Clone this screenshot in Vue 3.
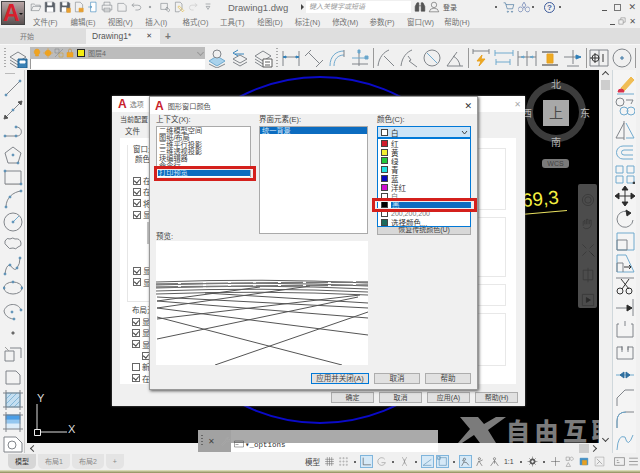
<template>
  <div class="app">
    <header class="head">
      <div class="logo">A<i class="logo-arrow"></i></div>
      <div class="head-right">
        <div class="title-row">
          <div class="qa">
            <Ico v-for="n in quick" :key="n" :n="n" :s="12" />
          </div>
          <span class="doc-title">Drawing1.dwg</span>
          <i class="tri-right"></i>
          <span class="search">键入关键字或短语</span>
          <Ico n="binoc" :s="12" class="binoc" />
          <Ico n="user" :s="12" class="user" />
          <span class="login">登录</span>
          <i class="dot dot-a"></i>
          <Ico n="cart" :s="12" class="cart" />
          <Ico n="a360" :s="12" class="a360" />
          <i class="dot dot-b"></i>
          <span class="help">?</span>
          <i class="dot dot-c"></i>
          <div class="win-ctl">
            <i class="ctl-min"></i>
            <i class="ctl-max"></i>
            <span class="ctl-x">✕</span>
          </div>
        </div>
        <div class="menu-row">
          <span v-for="m in menus" :key="m" class="menu-item">{{ m }}</span>
          <div class="doc-ctl">
            <i class="ctl-min small"></i>
            <Ico n="restore" :s="8" />
            <span class="ctl-x small">✕</span>
          </div>
        </div>
      </div>
    </header>

    <div class="tabs">
      <span class="tab-start">开始</span>
      <div class="tab-active">
        <span>Drawing1*</span>
        <span class="tab-x">✕</span>
      </div>
      <span class="tab-plus">+</span>
    </div>

    <div class="toolbar">
      <i class="grip"></i>
      <Ico n="layerProp" :s="20" class="layer-prop" />
      <div class="layer-combo">
        <div class="layer-top">
          <Ico n="bulb" :s="10" />
          <Ico n="sun" :s="10" />
          <Ico n="freeze" :s="10" />
          <Ico n="lock" :s="10" />
          <i class="yellow"></i>
          <span>图层4</span>
          <i class="chev"></i>
        </div>
        <div class="layer-bottom"></div>
      </div>
      <div class="tool-group layer-tools">
        <Ico n="layerMatch" :s="20" />
        <Ico n="layerPrev" :s="20" />
        <Ico n="layerState" :s="20" />
      </div>
      <i class="grip grip-2"></i>
      <div class="tool-group dim-tools">
        <template v-for="(n, i) in dims" :key="i">
          <i v-if="n === '|'" class="sep"></i>
          <Ico v-else :n="n" :s="20" />
        </template>
      </div>
    </div>

    <div class="main">
      <aside class="left-bar">
        <Ico v-for="n in leftTools" :key="n" :n="n" :s="20" />
      </aside>

      <div class="center">
        <div class="canvas">
          <svg class="blue-circle" width="572" height="373" viewBox="0 0 572 373">
            <circle cx="293" cy="180" r="173" fill="none" stroke="#0a0ac8" stroke-width="2" />
          </svg>

          <div class="yellow-num">69,3<i></i></div>

          <div class="cube">
            <div class="ring"></div>
            <div class="face">上</div>
            <span class="dir n">北</span>
            <span class="dir s">南</span>
            <span class="dir e">东</span>
            <span class="dir w">西</span>
          </div>
          <div class="wcs">WCS</div>

          <div class="navbar">
            <Ico v-for="n in navTools" :key="n" :n="n" :s="16" />
          </div>

          <svg class="ucs" width="60" height="56" viewBox="0 0 60 56">
            <path d="M10 18V43M13 46H40" stroke="#ddd" fill="none" />
            <path d="M7.500 43.500h6v6h-6z" stroke="#eee" fill="none" />
          </svg>
          <span class="ucs-y">Y</span>
          <span class="ucs-x">X</span>

          <div class="mark">
            <svg width="48" height="26" viewBox="0 0 48 26">
              <path d="M2 0H20L26 7L38 0H48L30 13L38 26H22L16 18L4 26H0L12 12Z" fill="#7b7b7b" />
            </svg>
            <span>自由互联</span>
          </div>
        </div>
        <div class="hscroll">
          <i class="arrow-left"></i>
          <i class="h-thumb"></i>
          <i class="arrow-right"></i>
        </div>

        <div class="cmd">
          <div class="cmd-grip">
            <i class="grip dark"></i>
            <span>✕</span>
            <Ico n="wrench" :s="10" />
          </div>
          <div class="cmd-body">
            <div class="cmd-hist"></div>
            <div class="cmd-line">
              <Ico n="prompt" :s="10" />
              <span>▾_options</span>
            </div>
          </div>
        </div>
      </div>

      <div class="vscroll">
        <i class="arrow-up"></i>
        <i class="v-thumb"></i>
        <i class="arrow-down"></i>
      </div>
      <aside class="right-bar">
        <Ico v-for="n in rightTools" :key="n" :n="n" :s="20" />
      </aside>
      <div class="far-right"></div>
    </div>

    <footer class="foot">
      <div class="foot-tabs">
        <span class="ft active">模型</span>
        <span class="ft">布局1</span>
        <span class="ft">布局2</span>
        <span class="ft">+</span>
      </div>
      <div class="status">
        <span class="st-model">模型</span>
        <template v-for="(s, i) in statusItems" :key="i">
          <i v-if="s === '.'" class="st-dot"></i>
          <span v-else-if="s === '1:1'" class="st-scale">1:1</span>
          <span v-else :class="['st-ico', { on: s.endsWith('!'), last: s.startsWith('>') }]">
            <Ico :n="s.replace('!', '').replace('>', '')" :s="11" />
          </span>
        </template>
      </div>
    </footer>
    <div class="sliver"></div>

    <!-- options dialog behind -->
    <section class="options">
      <div class="opt-title">
        <b class="a-logo">A</b>
        <span>选项</span>
        <span class="opt-x">✕</span>
      </div>
      <div class="opt-profile">当前配置</div>
      <div class="opt-tab">文件</div>
      <div class="opt-panel">
        <div class="opt-left">
          <div class="opt-frame">
            <div class="opt-head">窗口元</div>
            <div class="opt-sub">颜色主</div>
            <div class="checks first">
              <label v-for="(c, i) in checksA" :key="i"><i class="chk on"></i>{{ c }}</label>
            </div>
            <div class="opt-gray"></div>
            <div class="checks second">
              <label v-for="(c, i) in checksB" :key="i"><i class="chk on"></i>{{ c }}</label>
            </div>
          </div>
          <div class="opt-head layout">布局元</div>
          <div class="checks third">
            <label><i class="chk on"></i>显</label>
            <label><i class="chk on"></i>显</label>
            <label><i class="chk on"></i>显</label>
            <label class="indent"><i class="chk on"></i></label>
            <label><i class="chk"></i>新</label>
            <label><i class="chk on"></i>在</label>
          </div>
        </div>
        <div class="opt-right">
          <div class="gbox h60"></div>
          <div class="gbox h58"></div>
          <div class="gbox h20"></div>
          <div class="gbox h51"></div>
        </div>
      </div>
      <div class="opt-btns">
        <button>确定</button>
        <button>取消</button>
        <button>应用(A)</button>
        <button>帮助(H)</button>
      </div>
    </section>

    <!-- drawing window colors dialog -->
    <section class="colors">
      <div class="col-title">
        <b class="a-logo">A</b>
        <span>图形窗口颜色</span>
        <span class="col-x">✕</span>
      </div>
      <div class="col-body">
        <div class="col-top">
          <div class="col-ctx">
            <label>上下文(X):</label>
            <ul class="ctx-list">
              <li v-for="c in contexts" :key="c">{{ c }}</li>
              <li class="sel">打印预览</li>
            </ul>
          </div>
          <div class="col-el">
            <label>界面元素(E):</label>
            <ul class="el-list">
              <li class="sel">统一背景</li>
            </ul>
          </div>
          <div class="col-color">
            <label>颜色(C):</label>
            <div class="combo">
              <i class="swatch" style="background:#fff"></i>
              <span>白</span>
              <svg class="combo-chev" width="7" height="5" viewBox="0 0 7 5">
                <path d="M1 1L3.500 4L6 1" fill="none" stroke="#444" />
              </svg>
            </div>
            <div class="restore-btn">恢复传统颜色(U)</div>
            <ul class="dropdown">
              <li v-for="c in colorItems" :key="c.name" :class="{ sel: c.sel, clip: c.clip }">
                <i class="swatch" :style="{ background: c.color }"></i>
                <span>{{ c.name }}</span>
              </li>
            </ul>
          </div>
        </div>
        <label class="preview-label">预览:</label>
        <svg class="preview" width="212" height="124" viewBox="156 241 212 124">
          <rect x="156" y="241" width="212" height="124" fill="#fff" />
          <path v-for="y in horizon" :key="y" :d="`M156 ${y}Q262 ${y - 4} 368 ${y + 1}`" fill="none" stroke="#333" stroke-width=".8" />
          <path d="M156 284L368 282M156 287L368 285" stroke="#777" stroke-width="1.500" stroke-dasharray="22 3" />
          <path v-for="(l, i) in gridLines" :key="i" :d="l" stroke="#555" fill="none" />
        </svg>
        <div class="col-btns">
          <button class="primary">应用并关闭(A)</button>
          <button>取消</button>
          <button>帮助</button>
        </div>
      </div>
    </section>

    <!-- red markers -->
    <i class="red-box box-ctx"></i>
    <i class="red-box box-black"></i>
  </div>
</template>

<script setup>
import { h } from 'vue'

const G = '#7b8085'
const B = '#6aa6cc'
const D = '#2b2b2b'
const dot = (x, y, c = '#5a8fb5') => [`M${x - 0.8} ${y - 0.8}h1.6v1.6h-1.6z`, c, c]

const ICONS = {
  open: [['M2 16V5h5l2 2h8v3M2 16l3-7h13l-3 7z', G]],
  save: [['M2 2h14l2 2v14H2z', '#5a6068', '#5a6068'], ['M6 2h7v5H6zM5 11h10v7H5z', '#fff', '#fff']],
  saveas: [['M2 2h14l2 2v14H2z', '#5a6068', '#5a6068'], ['M6 2h7v5H6zM5 11h7v7H5z', '#fff', '#fff'], ['M13 12h6v7h-6z', '#e8a030', '#e8a030']],
  docUser: [['M4 2h8l4 4v12H4z', G], ['M10 12h7v6h-7z', '#e8a030', '#e8a030']],
  phone: [['M6 2h9v16H6z', '#2f7fb8', '#fff'], ['M2 10h6M6 8l2 2l-2 2', '#2f7fb8']],
  print: [['M5 7V2h10v5M2 7h16v8H2zM5 12h10v6H5z', G]],
  doc: [['M3 4h10l4 4v9H3z', G]],
  undo: [['M4 7h9q5 0 5 4t-5 4H9M7 4L3 7l4 3', G]],
  tdot: [['M9 9h2v2H9z', G, G]],
  cube2: [['M3 4h11v10H3zM13 10l5 5l-2 3l-5-4z', G]],
  mark2: [['M4 2h8l3 3v8l-5 5H4z', G], ['M10 8l8 8l-2 2l-8-8z', '#e0b020']],
  redo: [['M16 7H8q-4 0-4 4t4 4h3M13 4l4 3l-4 3', '#c4c4c4']],
  chevq: [['M6 5h8M7 9h6l-3 5z', G]],
  binoc: [['M2 17V9l3-6h3v14zM18 17V9l-3-6h-3v14zM8 8h4', '#444', '#555']],
  user: [['M10 2a4 4 0 1 1 0 9a4 4 0 1 1 0-9zM2 18q1-6 8-6t8 6z', '#555']],
  cart: [['M1 3h3l3 10h9l2-7H5M8 17a1 1 0 1 0 .1 0M15 17a1 1 0 1 0 .1 0', '#28608f']],
  a360: [['M10 2l3 5l-3 5l-3-5zM4 10a4 4 0 1 0 .1 0M16 10a4 4 0 1 0 .1 0', '#3d5b9b']],
  restore: [['M2 7h11v11H2zM7 7V2h11v11h-5', '#555']],
  layerProp: [['M2 9l8-5l8 5l-8 5zM2 12l8 5l8-5M2 15l8 5', G], ['M10 11h9v9h-9z', '#1d5f8f', '#3b82b6'], ['M12 13h5v2h-5z', '#fff', '#fff']],
  bulb: [['M10 2a6 6 0 0 1 3 11v3H7v-3a6 6 0 0 1 3-11z', '#e89a20', '#f0a420']],
  sun: [['M10 4a6 6 0 1 0 .1 0z', '#e89a20', '#f0a420'], ['M10 0v20M0 10h20', '#f0a420']],
  freeze: [['M2 2h8v8H2z', G], ['M10 10h8v8h-8z', '#d7a020'], ['M2 18L18 2', G]],
  lock: [['M4 9h12v9H4z', '#e89a20', '#f0a420'], ['M7 9V5a3 3 0 0 1 6 0v4', '#c08020']],
  layerMatch: [['M2 13l8-5l8 5l-8 5z', B, '#a9d2ec'], ['M2 16l8 4l8-4', G], ['M10 2a4 4 0 1 1 0 8a4 4 0 1 1 0-8z', G, '#f0f0f0']],
  layerPrev: [['M3 11l7-4l7 4l-7 4zM3 14l7 4l7-4', G], ['M14 6H5M8 2L3 5l5 3', '#2f7fb8']],
  layerState: [['M2 8l8-5l8 5l-8 5zM2 11l8 5M2 14l8 5', G], ['M10 11h9v8h-9zM12 14h5M12 17h5', '#555', '#fff']],
  dimLin: [['M2 3v15M18 3v15M2 9h16', G], ['M2 9l3-1v2zM18 9l-3-1v2z', '#2f7fb8', '#2f7fb8']],
  dimAli: [['M1 8L7 2M12 19L19 12M5 5l10 10', G]],
  dimArc: [['M3 18C3 8 9 3 17 3M7 18C7 11 11 7 17 7', B], ['M17 2v7', G]],
  dimOrd: [['M2 16h16M9 4v14', G], ['M2 10h16', B], ['M8 2h2v3H8zM15 8h3v3h-3z', B, B]],
  dimRad: [['M2 18C3 9 8 4 13 2M8 8l10 10', G]],
  dimJog: [['M2 18C3 9 8 4 13 2M9 8l3 4l-2 1l8 6', G]],
  dimDia: [['M2 10a8 8 0 1 0 16 0a8 8 0 1 0-16 0', G], ['M5 5l10 10', B]],
  dimAng: [['M2 18L12 4M18 18H2M8 8q6 3 7 10', G]],
  dimQuick: [['M2 3h16M2 1v5M18 1v5', G], ['M11 7L6 13h4l-2 5l6-7h-4z', '#e8a020', '#eeaa20']],
  dimBase: [['M1 5h18M2 14h14M1 2v6M19 2v6M2 11v6M16 11v6', B]],
  dimCont: [['M1 9h18M1 3v15M10 3v15M19 3v15', G], ['M4 9l3-1v2zM13 9l3-1v2z', B, B]],
  dimSpace: [['M2 4h16M2 17h16', D], ['M7 6h6v9H7z', '#e8a020', '#eeaa20']],
  dimBreak: [['M1 9h17M10 2v14M4 18h12', G], ['M13 7l5 2l-5 2z', '#2f7fb8', '#2f7fb8']],
  center1: [['M1 2h18v16H1zM10 2v16', G], ['M3 10a3.500 3.500 0 1 0 7 0a3.500 3.500 0 1 0-7 0M1 10h9M6 5v10', D], ['M14 6v8', D]],
  centerO: [['M1 10a9 9 0 1 0 18 0a9 9 0 1 0-18 0', G], ['M8 10h4M10 8v4', '#2f6f9f']],

  line: [['M3 17L17 3', G], dot(3, 17), dot(17, 3)],
  xline: [['M3 17L17 3', G], ['M1 19l1-4l3 3zM19 1l-1 4l-3-3z', '#555', '#555'], dot(10, 10)],
  poly: [['M2 13H14C20 13 20 4 13 4', G], dot(2, 13), dot(13, 13), dot(13, 4)],
  pent: [['M10 2L18 8L15 18H5L2 8Z', G], dot(10, 10), dot(15, 18)],
  rect: [['M2 4H18V17H2Z', G], ['M2 17.500H18', '#aaa'], dot(2, 4), dot(18, 17)],
  arc: [['M3 18C3 9 10 3 18 2', G], dot(3, 18), dot(7, 8), dot(18, 2)],
  circle: [['M1 10a9 9 0 1 0 18 0a9 9 0 1 0-18 0', G], ['M10 10L16 4', B], dot(10, 10)],
  cloud: [['M2 7q2-4 5-2q3-2 5 0q5-1 6 4q1 3-3 4q-2 3-5 1q-4 2-6-2q-3-2-2-5z', G]],
  spline: [['M2 18Q3 9 7 9Q12 16 14 12Q17 8 17 2', G], dot(2, 18), dot(7, 9), dot(14, 12), dot(17, 2)],
  ellipse: [['M1 10a9 6 0 1 0 18 0a9 6 0 1 0-18 0', G], dot(1, 10), dot(19, 10), dot(10, 4)],
  ellarc: [['M18 9C15 1 3 2 1 10C2 16 8 18 11 18', G], dot(9, 11), dot(18, 9), dot(11, 18)],
  block: [['M2 6h9v10H2zM7 3h11v10', G], ['M2 2l4 4', '#999']],
  points: [['M9 9h2v2H9z', '#6a6a6a', '#6a6a6a']],
  hatch: [['M3 3h14v14H3z', '#7eb5d8', '#c4def0'], ['M3 9L9 3M3 14L14 3M6 17L17 6M11 17L17 11', '#7fb5d8'], ['M0 3h20M0 17h20M3 0v20M17 0v20', G]],
  grad: [['M3 3h14v5H3z', '#3c90dc', '#4c9ee6'], ['M3 8h14v4H3z', '#93c6ef', '#93c6ef'], ['M3 12h14v5H3z', '#dcedfa', '#dcedfa'], ['M0 3h20M0 17h20M3 0v20M17 0v20', G]],
  region: [['M1 3H13L19 9V18H1Z', G, '#fff'], ['M5 11a4 4 0 1 0 8 0a4 4 0 1 0-8 0', G]],

  eraser: [['M6 13L16 2l3 3L9 16z', '#eeb84a', '#f0bd55'], ['M3 17a3 3 0 1 1 6 0z', '#d8304a', '#d8304a'], ['M2 19h17', B]],
  copy: [['M1 5a4 4 0 1 0 8 0a4 4 0 1 0-8 0M11 3h7l-2 4', G], ['M5 14a4 4 0 1 0 8 0a4 4 0 1 0-8 0M12 14a4 4 0 1 0 8 0a4 4 0 1 0-8 0', B]],
  mirror: [['M9 1v19M9 3L1 18h8', G], ['M11 3L19 18h-8', B]],
  offset: [['M18 4H8a6 6 0 0 0 0 13h10M18 8H9a2.500 2.500 0 0 0 0 5h9', B]],
  array: [['M1 2h7v7H1zM12 2h7v7h-7zM1 12h7v7H1zM12 12h7v7h-7z', B], dot(19, 19, '#333')],
  move: [['M10 1v18M1 10h18', D], ['M10 0l3 4H7zM10 20l3-4H7zM0 10l4-3v6zM20 10l-4-3v6z', D, D]],
  rotate: [['M15 4A8 8 0 1 0 18 11', G], ['M11 1l5 3l-4 3z', D, D]],
  scale: [['M2 2h17v17H2z', B], ['M2 9h10v10H2z', G]],
  stretch: [['M2 2h9l8 17H2z', B], ['M2 10v9M2 10h6v9', G], ['M9 14h7l-2-2M16 14l-2 2', D]],
  scissors: [['M1 2h18', G], ['M6 3l8 10M14 3L7 13', D], ['M2 15a3 3 0 1 0 6 0a3 3 0 1 0-6 0M11 15a3 3 0 1 0 6 0a3 3 0 1 0-6 0', D]],
  extend: [['M18 1v17M1 10h16', G], ['M12 7l5 3l-5 3z', D, D]],
  breakP: [['M2 4h2M16 4h2M10 1v5M2 4v13h16V4', G]],
  breakL: [['M2 4h5v3M18 4h-5v3M7 3v6M13 3v6M2 4v12h16V4', G]],
  join: [['M1 10h18', B], ['M5 10l4-3v6zM15 10l-4-3v6z', '#2f6f9f', '#2f6f9f']],
  chamfer: [['M2 19V11L10 3H19', G]],
  fillet: [['M2 19V12Q2 3 11 3H19', G], ['M2 19V12Q2 3 11 3', B]],
  wave: [['M2 18Q3 2 10 5Q13 17 18 3', B]],

  wrench: [['M3 17L12 8a4 4 0 0 1 5-5l-3 3l1 2l2 0l2-2a4 4 0 0 1-6 5l-8 8z', '#aaa']],
  prompt: [['M1 4h18v12H1zM1 7h18M3 11h6', '#444']],
  nav1: [['M3 10a7 7 0 1 0 14 0a7 7 0 1 0-14 0M6 10a4 4 0 1 0 8 0a4 4 0 1 0-8 0', '#383838']],
  nav2: [['M4 11V6l2-2v5M8 9V3h2v6M12 9V4h2v6a6 6 0 0 1-10 3', '#383838']],
  nav3: [['M3 3l5 5M17 3l-5 5M3 17l5-5M11 11l5 5', '#383838'], ['M14 14l4 4', '#2a2a2a']],
  nav4: [['M10 1v18M4 4h12v12H4z', '#383838']],
  nav5: [['M3 3h14v14H3z', '#383838'], ['M8 7l5 3l-5 3z', '#2a2a2a', '#2a2a2a']],
  grid: [['M2 6h16M2 10h16M2 14h16M6 2v16M10 2v16M14 2v16', '#666']],
  snap: [['M3 3h2v2H3zM9 3h2v2H9zM15 3h2v2h-2zM3 9h2v2H3zM9 9h2v2H9zM15 9h2v2h-2zM3 15h2v2H3zM9 15h2v2H9zM15 15h2v2h-2z', '#999']],
  ortho: [['M4 3V16H18', '#333']],
  polar: [['M16 6A7 7 0 1 0 17 12H10', '#888']],
  iso: [['M6 2L14 18M14 2L6 18M10 6v8', '#888']],
  osnap: [['M2 17L17 6M2 17H17', '#4680a8']],
  otrack: [['M4 3h13v14H4z', '#4680a8'], ['M1 1h5v5H1z', '#4680a8']],
  person: [['M8 4a2 2 0 1 1 0 4a2 2 0 1 1 0-4zM3 18l4-7l5 1l4 5M8 10L4 8', '#333']],
  person2: [['M8 3a2 2 0 1 1 0 4a2 2 0 1 1 0-4zM3 18l4-9l6 9M8 10l6-3', '#444']],
  person3: [['M10 3a2 2 0 1 1 0 4a2 2 0 1 1 0-4zM3 18l7-10l7 10M10 9v5', '#444']],
  gear: [['M10 5a5 5 0 1 0 .1 0z', '#555', '#555'], ['M10 1v18M1 10h18M4 4l12 12M16 4L4 16', '#555'], ['M10 8a2 2 0 1 0 .1 0z', '#f0f0f0', '#f0f0f0']],
  plus: [['M10 2v16M2 10h16', '#555']],
  shapes: [['M2 2h6v6H2zM12 2a3 3 0 1 0 .1 0M6 12l4 7H2z', '#888']],
  info: [['M2 4h14v12H2z', '#2f7fb8', '#3f8fc8'], ['M6 8h8v8H6z', '#e8a020', '#e8a020']],
  isolate: [['M2 2h16v16H2z', '#999'], ['M5 5l10 10M5 15l5-5', '#777']],
  maxi: [['M1 3h18v14H1z', '#555'], ['M5 12h5M5 8h3', '#555']],
  burger: [['M2 4h16M2 10h16M2 16h16', '#555']]
}

// small svg helper so the long icon lists stay readable
const Ico = (props) =>
  h(
    'svg',
    { width: props.s, height: props.s, viewBox: '0 0 20 20', style: 'display:block;flex:none;overflow:hidden' },
    (ICONS[props.n] || []).map((p) =>
      h('path', { d: p[0], stroke: p[1], fill: p[2] || 'none', 'stroke-width': 0.95 })
    )
  )
Ico.props = ['n', 's']

const quick = ['open', 'save', 'saveas', 'docUser', 'phone', 'print', 'doc', 'undo', 'tdot', 'cube2', 'mark2', 'redo', 'chevq']
const menus = ['文件(F)', '编辑(E)', '视图(V)', '插入(I)', '格式(O)', '工具(T)', '绘图(D)', '标注(N)', '修改(M)', '参数(P)', '窗口(W)', '帮助(H)']
const dims = ['dimLin', 'dimAli', 'dimArc', 'dimOrd', '|', 'dimRad', 'dimJog', 'dimDia', 'dimAng', '|', 'dimQuick', 'dimBase', 'dimCont', 'dimSpace', 'dimBreak', '|', 'center1', 'centerO', '|']
const leftTools = ['line', 'xline', 'poly', 'pent', 'rect', 'arc', 'circle', 'cloud', 'spline', 'ellipse', 'ellarc', 'points', 'block', 'doc', 'hatch', 'grad', 'region']
const rightTools = ['eraser', 'copy', 'mirror', 'offset', 'array', 'move', 'rotate', 'scale', 'stretch', 'scissors', 'extend', 'breakP', 'breakL', 'join', 'chamfer', 'fillet', 'wave']
const navTools = ['nav1', 'nav2', 'nav3', 'nav4', 'nav5']
const statusItems = ['grid', 'snap', '.', 'ortho!', 'polar', '.', 'iso', '.', 'osnap!', 'otrack!', '.', 'person!', 'person2', 'person3', '1:1', '.', 'gear', '.', 'plus', 'shapes', 'info', 'isolate', '>maxi', 'burger']

const checksA = ['在', '在', '将', '显']
const checksB = ['显', '显']
const contexts = ['二维模型空间', '图纸/布局', '三维平行投影', '三维透视投影', '块编辑器', '命令行']
const colorItems = [
  { name: '红', color: '#d01c2c' },
  { name: '黄', color: '#f2ee30' },
  { name: '绿', color: '#22c83c' },
  { name: '青', color: '#20e0e0' },
  { name: '蓝', color: '#0808c0' },
  { name: '洋红', color: '#d010d0' },
  { name: '白', color: '#fff', clip: true },
  { name: '黑', color: '#000', sel: true },
  { name: '200,200,200', color: '#fff', clip: true },
  { name: '选择颜色...', color: '#1c6a5c' }
]
const horizon = [282, 285, 288, 291, 294]
const gridLines = [
  'M215 365L368 312',
  'M157 317L342 365',
  'M157 308L368 335',
  'M157 319L360 295',
  'M157 339L358 297',
  'M157 301L368 318',
  'M157 297L368 308',
  'M157 308L310 286',
  'M157 301L260 287',
  'M205 293L368 303'
]
</script>

<style>
html,
body {
  margin: 0;
  background: #f0f0f0;
}
</style>

<style scoped>
.app {
  position: relative;
  width: 640px;
  height: 473px;
  overflow: hidden;
  display: flex;
  flex-direction: column;
  background: #f0f0f0;
  color: #555;
  font: 8px "Liberation Sans", "Noto Sans CJK SC", sans-serif;
}
ul {
  margin: 0;
  padding: 0;
  list-style: none;
}
i {
  display: block;
  flex: none;
}
button {
  font: inherit;
  color: #444;
  background: #e1e1e1;
  border: 1px solid #adadad;
  padding: 0;
}

/* head */
.head {
  display: flex;
  height: 28px;
  flex: none;
}
.logo {
  position: relative;
  width: 24px;
  height: 24px;
  margin: 1px 2px 3px 1px;
  background: linear-gradient(#b9a6a6, #5b5252);
  border: 1px solid #444;
  box-sizing: border-box;
  color: #d8202c;
  font: bold 23px/22px "Liberation Sans", sans-serif;
  padding-left: 1px;
}
.logo-arrow {
  position: absolute;
  right: 1px;
  bottom: 7px;
  border: 2px solid transparent;
  border-top-color: #111;
}
.head-right {
  flex: 1;
  min-width: 0;
}
.title-row {
  display: flex;
  align-items: center;
  height: 14px;
  padding-left: 3px;
}
.qa {
  display: flex;
  gap: 2.300px;
  width: 182px;
  flex: none;
}
.doc-title {
  margin-left: 16px;
  width: 50px;
  color: #666;
  font-size: 9.500px;
  white-space: nowrap;
}
.tri-right {
  margin-left: 23px;
  border: 3px solid transparent;
  border-left: 3px solid #444;
  border-right: 0;
}
.search {
  margin-left: 2px;
  width: 105px;
  height: 12px;
  box-sizing: border-box;
  padding-left: 3px;
  background: #fff;
  font: italic 7px/12px "Liberation Sans", "Noto Sans CJK SC", sans-serif;
  color: #999;
}
.binoc {
  margin-left: 3px;
}
.user {
  margin-left: 2px;
}
.login {
  margin-left: 3px;
  font-size: 7px;
  width: 16px;
}
.dot {
  width: 2px;
  height: 2px;
  background: #666;
}
.dot-a {
  margin-left: 36px;
}
.cart {
  margin-left: 6px;
}
.a360 {
  margin-left: 3px;
}
.dot-b {
  margin-left: 2px;
}
.help {
  margin-left: 10px;
  width: 11px;
  height: 11px;
  box-sizing: border-box;
  border: 1px solid #3d5b9b;
  border-radius: 50%;
  color: #3d5b9b;
  font: bold 8px/9px "Liberation Sans", sans-serif;
  text-align: center;
}
.dot-c {
  margin-left: 4px;
}
.win-ctl {
  margin-left: auto;
  padding-right: 4px;
  display: flex;
  align-items: center;
  gap: 7px;
  color: #555;
}
.ctl-min {
  width: 5px;
  height: 1px;
  background: #555;
  margin-top: 6px;
}
.ctl-max {
  width: 7px;
  height: 7px;
  border: 1px solid #777;
  box-sizing: border-box;
}
.ctl-x {
  font: 9px/9px "DejaVu Sans", sans-serif;
}
.menu-row {
  display: flex;
  align-items: center;
  height: 14px;
  padding-left: 6px;
}
.menu-item {
  width: 37.400px;
  flex: none;
  white-space: nowrap;
  color: #707070;
  font-size: 7.500px;
}
.doc-ctl {
  margin-left: auto;
  padding-right: 4px;
  display: flex;
  align-items: center;
  gap: 3px;
}
.small {
  font-size: 8px;
}

/* file tabs */
.tabs {
  display: flex;
  align-items: center;
  flex: none;
  height: 16px;
  background: #dedede;
}
.tab-start {
  margin-left: 20px;
  width: 66px;
  color: #777;
  font-size: 7px;
}
.tab-active {
  display: flex;
  align-items: center;
  justify-content: space-between;
  width: 74px;
  height: 15px;
  box-sizing: border-box;
  padding: 0 8px 0 6px;
  background: #f2f2f2;
  font-size: 8.500px;
  color: #555;
}
.tab-x {
  font: 7px "DejaVu Sans", sans-serif;
  color: #444;
}
.tab-plus {
  margin-left: 5px;
  font: bold 10px "Liberation Sans", sans-serif;
  color: #777;
}

/* toolbar */
.toolbar {
  display: flex;
  align-items: center;
  flex: none;
  height: 26px;
  padding-left: 4px;
  background: #f0f0f0;
  border-top: 1px solid #f8f8f8;
  box-sizing: border-box;
}
.grip {
  width: 2px;
  height: 20px;
  background: repeating-linear-gradient(#aaa 0 1px, transparent 1px 3px);
}
.grip.dark {
  background: repeating-linear-gradient(#666 0 1px, transparent 1px 3px);
}
.layer-prop {
  margin-left: 2px;
}
.layer-combo {
  margin-left: 2px;
  width: 175px;
  flex: none;
}
.layer-top {
  display: flex;
  align-items: center;
  gap: 1px;
  height: 12px;
  padding-left: 2px;
  background: #bcbcbc;
  color: #666;
  font-size: 7px;
}
.yellow {
  width: 8px;
  height: 8px;
  background: #f4ec10;
  border: 1px solid #222;
  box-sizing: border-box;
  margin-right: 2px;
  margin-left: 1px;
}
.chev {
  margin-left: auto;
  margin-right: 2px;
  width: 4px;
  height: 4px;
  border-right: 1px solid #999;
  border-bottom: 1px solid #999;
  transform: rotate(45deg);
}
.layer-bottom {
  height: 10px;
  background: #fff;
  border-left: 1px solid #999;
}
.tool-group {
  display: flex;
  gap: 3px;
  align-items: center;
}
.layer-tools {
  margin-left: 2px;
}
.grip-2 {
  margin-left: 3px;
}
.dim-tools {
  margin-left: 3px;
}
.sep {
  width: 1px;
  height: 20px;
  background: #999;
  margin-right: -1px;
}

/* main area */
.main {
  flex: 1;
  min-height: 0;
  display: flex;
}
.left-bar {
  width: 25px;
  margin-right: 2px;
  flex: none;
  box-sizing: border-box;
  padding: 8px 0 0 3px;
  display: flex;
  flex-direction: column;
  gap: 2.250px;
  background: linear-gradient(#bbb, #bbb) 5px 3px / 10px 1px no-repeat, #f2f2f2;
  border-right: 1px solid #c9c9c9;
}
.center {
  position: relative;
  width: 572px;
  flex: none;
  display: flex;
  flex-direction: column;
}
.canvas {
  position: relative;
  flex: 1;
  background: #000;
  overflow: hidden;
}
.hscroll {
  flex: none;
  height: 10px;
  display: flex;
  align-items: center;
  background: #f0f0f0;
  padding: 0 3px 0 4px;
}
.arrow-left,
.arrow-right {
  width: 4px;
  height: 4px;
  border-left: 1px solid #444;
  border-bottom: 1px solid #444;
  transform: rotate(45deg);
}
.arrow-right {
  transform: rotate(225deg);
  margin-left: 2px;
}
.h-thumb {
  margin-left: auto;
  width: 10px;
  height: 9px;
  background: #cdcdcd;
}
.vscroll {
  width: 13px;
  flex: none;
  display: flex;
  flex-direction: column;
  align-items: center;
  padding-top: 2px;
  box-sizing: border-box;
  background: #f0f0f0;
}
.arrow-up,
.arrow-down {
  width: 4px;
  height: 4px;
  border-left: 1px solid #444;
  border-top: 1px solid #444;
  transform: rotate(45deg);
}
.arrow-down {
  transform: rotate(225deg);
  margin-top: auto;
  margin-bottom: 12px;
}
.v-thumb {
  margin-top: 3px;
  width: 9px;
  height: 10px;
  background: #cdcdcd;
}
.right-bar {
  width: 24px;
  flex: none;
  box-sizing: border-box;
  padding: 5px 0 0 2px;
  display: flex;
  flex-direction: column;
  gap: 2.300px;
  background: #f4f4f4;
  border-left: 1px solid #d0d8dc;
  overflow: hidden;
}
.far-right {
  flex: 1;
}

/* things on the drawing */
.blue-circle {
  position: absolute;
  left: 0;
  top: 0;
}
.yellow-num {
  position: absolute;
  left: 495px;
  top: 118px;
  color: #f4f040;
  font-size: 19px;
  line-height: 21px;
  transform: rotate(-5deg);
}
.yellow-num i {
  width: 46px;
  height: 1px;
  background: #e8e060;
  margin: 3px 0 0 -2px;
}
.cube {
  position: absolute;
  left: 492px;
  top: 9px;
  width: 76px;
  height: 70px;
}
.ring {
  position: absolute;
  left: 7px;
  top: 3px;
  width: 60px;
  height: 60px;
  box-sizing: border-box;
  border: 7px solid #3c3c3c;
  border-radius: 50%;
}
.face {
  position: absolute;
  left: 24px;
  top: 21px;
  width: 26px;
  height: 26px;
  background: #a8a8a8;
  color: #4a4a4a;
  font-size: 14px;
  line-height: 26px;
  text-align: center;
}
.dir {
  position: absolute;
  color: #b8b8b8;
  font-size: 10px;
  line-height: 12px;
}
.n {
  left: 32px;
  top: 0;
}
.s {
  left: 32px;
  top: 58px;
}
.e {
  left: 61px;
  top: 29px;
}
.w {
  left: 3px;
  top: 29px;
}
.wcs {
  position: absolute;
  left: 515px;
  top: 89px;
  width: 27px;
  height: 9px;
  border-radius: 3px;
  background: #7a7a7a;
  color: #444;
  font-size: 7px;
  line-height: 9px;
  text-align: center;
}
.navbar {
  position: absolute;
  left: 551px;
  top: 114px;
  width: 19px;
  height: 124px;
  box-sizing: border-box;
  padding: 8px 0 0 2px;
  display: flex;
  flex-direction: column;
  gap: 9px;
  border-radius: 2px;
  background: #4c4c4c;
}
.ucs {
  position: absolute;
  left: 0;
  top: 316px;
}
.ucs-y,
.ucs-x {
  position: absolute;
  color: #ddd;
  font-size: 11px;
  line-height: 11px;
}
.ucs-y {
  left: 10px;
  top: 323px;
}
.ucs-x {
  left: 41px;
  top: 354px;
}
.mark {
  position: absolute;
  left: 431px;
  top: 347px;
  display: flex;
  align-items: flex-start;
  color: #7b7b7b;
  font: 900 24px/26px "Noto Sans CJK SC", sans-serif;
  letter-spacing: 4.500px;
  white-space: nowrap;
}
.cmd {
  position: absolute;
  left: 171px;
  top: 360px;
  width: 240px;
  height: 22px;
  display: flex;
}
.cmd-grip {
  width: 33px;
  display: flex;
  align-items: center;
  gap: 5px;
  padding-left: 3px;
  box-sizing: border-box;
  background: #a2a2a2;
  color: #444;
  font: 8px "DejaVu Sans", sans-serif;
}
.cmd-grip .grip {
  height: 12px;
}
.cmd-body {
  flex: 1;
  min-width: 0;
}
.cmd-hist {
  height: 13px;
  background: #aaa;
}
.cmd-line {
  display: flex;
  align-items: center;
  height: 9px;
  gap: 1px;
  padding-left: 3px;
  background: #fff;
  color: #333;
  font: 7.500px "Liberation Mono", monospace;
}
.cmd-line > * {
  margin-top: -7px;
}

/* bottom */
.foot {
  display: flex;
  align-items: center;
  flex: none;
  height: 17px;
  background: #f0f0f0;
}
.foot-tabs {
  display: flex;
  width: 305px;
  flex: none;
  padding-left: 8px;
  box-sizing: border-box;
  gap: 2px;
  color: #888;
  font-size: 7px;
}
.ft {
  padding: 0 7px;
  line-height: 15px;
  background: #e4e4e4;
  border-radius: 0 0 5px 5px;
}
.ft.active {
  color: #333;
  background: #d6d6d6;
}
.status {
  display: flex;
  align-items: center;
  gap: 3.600px;
  color: #444;
  font-size: 7.500px;
}
.st-model {
  width: 15px;
  flex: none;
  white-space: nowrap;
}
.st-ico {
  width: 11px;
  height: 11px;
  flex: none;
}
.st-ico.on {
  outline: 1px solid #7fb5dc;
  background: #d6e9f7;
}
.st-ico.last {
  margin-left: 5px;
}
.st-dot {
  width: 5px;
  height: 2px;
  background: linear-gradient(90deg, transparent 1px, #666 1px, #666 3px, transparent 3px);
}
.st-scale {
  width: 11px;
  flex: none;
  font-size: 7px;
}
.sliver {
  flex: none;
  height: 3px;
  background: linear-gradient(#e8e8c8, #8b8b58);
}

/* options dialog */
.options {
  position: absolute;
  left: 112px;
  top: 96px;
  width: 413px;
  height: 310px;
  display: flex;
  flex-direction: column;
  background: #f0f0f0;
  color: #444;
  box-shadow: 0 0 2px #666;
}
.opt-title {
  display: flex;
  align-items: center;
  gap: 3px;
  height: 16px;
  flex: none;
  padding-left: 6px;
  background: #fff;
  color: #777;
  font-size: 7px;
}
.a-logo {
  color: #c8202a;
  font: bold 12px/12px "Liberation Sans", sans-serif;
}
.opt-x {
  margin-left: auto;
  margin-right: 4px;
  color: #aaa;
  font: 8px "DejaVu Sans", sans-serif;
}
.opt-profile {
  margin: 2px 0 0 8px;
  line-height: 11px;
  font-size: 7px;
  white-space: nowrap;
}
.opt-tab {
  margin-left: 13px;
  line-height: 12px;
  padding-top: 1px;
  font-size: 7.500px;
  white-space: nowrap;
}
.opt-panel {
  flex: none;
  height: 246px;
  margin: 0 9px 0 8px;
  background: #fff;
  display: flex;
  justify-content: space-between;
  padding: 7px 10px 0 7px;
  box-sizing: border-box;
}
.opt-left {
  width: 60px;
}
.opt-frame {
  height: 157px;
  border-left: 1px solid #e6e6e6;
  border-bottom: 1px solid #e6e6e6;
  padding-left: 5px;
  box-sizing: border-box;
}
.opt-head {
  line-height: 9px;
  font-size: 7.500px;
}
.opt-head.layout {
  margin: 4px 0 0 5px;
}
.opt-sub {
  margin: 1px 0 0 2px;
  line-height: 9px;
  font-size: 7.500px;
}
.checks {
  display: flex;
  flex-direction: column;
}
.checks label {
  display: flex;
  align-items: center;
  gap: 2px;
  height: 11.300px;
  font-size: 8px;
}
.checks .indent {
  padding-left: 10px;
}
.first {
  margin-top: 11px;
}
.second {
  margin-top: 21px;
}
.third {
  margin: 1px 0 0 5px;
}
.chk {
  position: relative;
  width: 8px;
  height: 8px;
  box-sizing: border-box;
  border: 1px solid #666;
  background: #fff;
}
.chk.on::after {
  content: '';
  position: absolute;
  left: 1px;
  top: 0;
  width: 3px;
  height: 4px;
  border-right: 1px solid #444;
  border-bottom: 1px solid #444;
  transform: rotate(40deg);
}
.opt-gray {
  margin: 2px 0 0 14px;
  width: 3px;
  height: 22px;
  background: #c4c4c4;
}
.opt-right {
  width: 28px;
  margin-top: 3px;
  display: flex;
  flex-direction: column;
  gap: 7px;
}
.gbox {
  border: 1px solid #e8e8e8;
  border-left: 0;
}
.h60 {
  height: 60px;
}
.h58 {
  height: 58px;
}
.h20 {
  height: 20px;
}
.h51 {
  height: 51px;
}
.opt-btns {
  margin: 8px 7px 0 auto;
  display: flex;
  gap: 5px;
}
.opt-btns button {
  width: 43px;
  height: 11px;
  font-size: 7px;
  line-height: 9px;
}

/* colors dialog */
.colors {
  position: absolute;
  left: 149px;
  top: 96px;
  width: 329px;
  height: 294px;
  display: flex;
  flex-direction: column;
  background: #f0f0f0;
  box-shadow: 1px 1px 3px #555;
  border: 1px solid #999;
  box-sizing: border-box;
  color: #444;
}
.col-title {
  display: flex;
  align-items: center;
  gap: 4px;
  flex: none;
  height: 17px;
  padding-left: 5px;
  background: #fff;
  font-size: 7.200px;
  color: #555;
}
.col-x {
  margin-left: auto;
  margin-right: 5px;
  color: #333;
  font: 9px "DejaVu Sans", sans-serif;
}
.col-body {
  flex: 1;
  padding: 0 6px;
  display: flex;
  flex-direction: column;
}
.col-top {
  display: flex;
  height: 117px;
  flex: none;
}
.col-top label,
.preview-label {
  display: block;
  height: 12px;
  line-height: 12px;
  font-size: 7.500px;
  white-space: nowrap;
}
.col-ctx {
  width: 103px;
  flex: none;
}
.ctx-list {
  width: 95px;
  height: 52px;
  box-sizing: border-box;
  border: 1px solid #aaa;
  background: #fff;
  overflow: hidden;
  font-size: 7.200px;
  line-height: 7px;
}
.ctx-list li {
  height: 7px;
  padding-left: 2px;
  white-space: nowrap;
}
.ctx-list .sel,
.el-list .sel {
  background: #0c6cc0;
  color: #cfe6f8;
}
.col-el {
  width: 118px;
  flex: none;
}
.el-list {
  width: 109px;
  height: 108px;
  box-sizing: border-box;
  border: 1px solid #aaa;
  background: #fff;
  font-size: 7.200px;
  line-height: 7px;
}
.el-list li {
  height: 7px;
  padding-left: 2px;
}
.col-color {
  position: relative;
  width: 94px;
  flex: none;
}
.combo {
  display: flex;
  align-items: center;
  gap: 3px;
  height: 12px;
  box-sizing: border-box;
  padding-left: 3px;
  background: #cce4f7;
  border: 1px solid #0078d7;
  font-size: 7.500px;
  color: #333;
}
.combo-chev {
  margin-left: auto;
  margin-right: 2px;
}
.swatch {
  width: 5px;
  height: 5px;
  box-sizing: content-box;
  border: 1px solid #444;
}
.restore-btn {
  margin-top: 88px;
  height: 7px;
  background: #d8d8d8;
  border: 1px solid #aaa;
  text-align: center;
  font-size: 7px;
  line-height: 5px;
  overflow: hidden;
  white-space: nowrap;
}
.dropdown {
  position: absolute;
  left: 0;
  top: 24px;
  width: 94px;
  height: 89px;
  box-sizing: border-box;
  border: 1px solid #0078d7;
  background: #fff;
  font-size: 7.500px;
  color: #333;
  overflow: hidden;
}
.dropdown li {
  display: flex;
  align-items: center;
  gap: 3px;
  height: 8.800px;
  padding-left: 3px;
  overflow: hidden;
  white-space: nowrap;
}
.dropdown li.sel span {
  align-self: stretch;
  flex: 1;
  background: #0c6cc0;
  color: #cfe6f8;
  line-height: 8px;
  padding-left: 1px;
}
.dropdown li.clip {
  font-size: 7px;
  color: #777;
}
.preview {
  display: block;
  margin-top: -2px;
  flex: none;
}
.col-btns {
  margin-top: 8px;
  display: flex;
  justify-content: flex-end;
  gap: 5px;
}
.col-btns button {
  width: 46px;
  height: 11px;
  font-size: 7.500px;
  line-height: 9px;
}
.col-btns .primary {
  width: 58px;
  border: 1px solid #0078d7;
}

/* red callouts */
.red-box {
  position: absolute;
  box-sizing: border-box;
  border: 3px solid #d4201c;
  box-shadow: inset 0 0 0 1px #eee;
}
.box-ctx {
  left: 154px;
  top: 166px;
  width: 102px;
  height: 15px;
}
.box-black {
  left: 372px;
  top: 198px;
  width: 105px;
  height: 14px;
}
</style>
